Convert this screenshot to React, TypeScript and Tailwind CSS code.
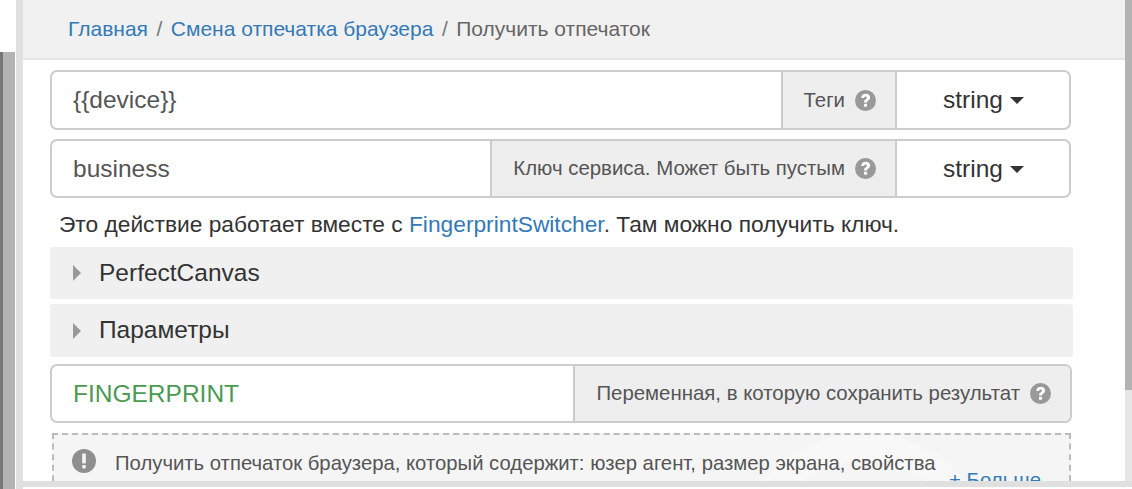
import React from 'react';

const QuestionIcon = () => (
    <svg viewBox="0 0 20 20" className="h-[21px] w-[21px] shrink-0">
        <circle cx="10" cy="10" r="10" fill="#999999" />
        <path d="M5.9 7.6C6.1 5 7.8 3.6 10.2 3.6c2.5 0 4.2 1.5 4.2 3.6 0 1.5-.8 2.3-1.9 3.1-.8.6-1 .9-1 1.7H8.6c0-1.5.4-2.3 1.4-3 .9-.7 1.3-1 1.3-1.6 0-.7-.5-1.1-1.2-1.1-.9 0-1.3.5-1.4 1.4z" fill="#ffffff" />
        <rect x="8.6" y="13" width="2.9" height="2.9" rx=".4" fill="#ffffff" />
    </svg>
);

const Caret = () => <span className="ml-[7px] inline-block border-x-[7px] border-t-[7px] border-x-transparent border-t-[#333333]"></span>;

const Arrow = () => <span className="inline-block border-y-[8px] border-l-[8px] border-y-transparent border-l-[#999999]"></span>;

const InputRow = ({ value, label, green, height }: { value: string; label: string; green?: boolean; height: string }) => (
    <div className={`flex ${height} ${green ? 'mr-[1px]' : 'mr-[2px]'} overflow-hidden rounded-[7px] border-2 border-[#cccccc] bg-white`}>
        <div className={`flex flex-1 items-center pl-[21px] pt-[1px] text-[24.5px] ${green ? 'text-[#4a9a52]' : 'text-[#555555]'}`}>{value}</div>
        <div className="flex items-center gap-[10px] border-l-2 border-[#cccccc] bg-[#eeeeee] pl-[21px] pr-[19px] text-[20.4px] text-[#555555]">
            <span>{label}</span>
            <QuestionIcon />
        </div>
        {!green && (
            <div className="flex w-[174px] items-center justify-center border-l-2 border-[#cccccc] pl-[1px] pt-[1px] text-[24.5px] text-[#333333]">
                string
                <Caret />
            </div>
        )}
    </div>
);

const Section = ({ title, height }: { title: string; height: string }) => (
    <div className={`flex ${height} items-center rounded-[3px] bg-[#f0f0f0] pl-[23px] text-[24.5px] text-[#333333]`}>
        <Arrow />
        <span className="ml-[18px]">{title}</span>
    </div>
);

const App: React.FC = () => {
    return (
        <div className="flex h-[489px] w-[1132px] overflow-hidden bg-white font-['Liberation_Sans',Arial,sans-serif]">
            {/* Left edge of the sidebar */}
            <div className="flex w-[16px] flex-col pt-[52px]">
                <div className="flex flex-1 pr-px">
                    <div className="w-[3px] bg-[#777777]"></div>
                    <div className="flex-1 bg-[#b3b3b3]"></div>
                </div>
            </div>
            <div className="w-[7px] bg-[#e0e0e0]"></div>

            <div className="flex min-w-0 flex-1 flex-col pb-[2px]">
                <div className="flex min-h-0 flex-1">
                    <main className="min-w-0 flex-1 overflow-hidden">
                        <nav className="flex h-[60px] items-center border-b-2 border-[#e5e5e5] bg-[#f1f1f1] pl-[45px] text-[21px] text-[#555555]">
                            <a href="#/" className="text-[#337ab7]">Главная</a>
                            <span className="px-[8.5px] text-[#777777]">/</span>
                            <a href="#/" className="text-[#337ab7]">Смена отпечатка браузера</a>
                            <span className="px-[8.5px] text-[#777777]">/</span>
                            <span className="text-[#666666]">Получить отпечаток</span>
                        </nav>

                        <div className="pl-[27px] pr-[52px] pt-[10px]">
                            <InputRow value="{{device}}" label="Теги" height="h-[60px]" />
                            <div className="mt-[9px]">
                                <InputRow value="business" label="Ключ сервиса. Может быть пустым" height="h-[59px]" />
                            </div>
                            <p className="ml-[9px] mt-[13px] text-[22.75px] leading-[26px] text-[#333333]">
                                Это действие работает вместе с <a href="#/" className="text-[#337ab7]">FingerprintSwitcher</a>. Там можно получить ключ.
                            </p>
                            <div className="mt-[10px]">
                                <Section title="PerfectCanvas" height="h-[52px]" />
                            </div>
                            <div className="mt-[5px]">
                                <Section title="Параметры" height="h-[53px]" />
                            </div>
                            <div className="mt-[7px]">
                                <InputRow value="FINGERPRINT" label="Переменная, в которую сохранить результат" green height="h-[59px]" />
                            </div>
                            <div className="relative ml-[2px] mr-[2px] mt-[10px] h-[80px] border-2 border-dashed border-[#bbbbbb] bg-[#f5f5f5] pl-[18px] pt-[14px]">
                                {/* Faint watermark behind the hint */}
                                <svg viewBox="0 0 340 80" className="absolute right-0 top-0 h-[80px] w-[340px]" fill="none" stroke="#f8f8f8" strokeWidth="28">
                                    <circle cx="136" cy="127" r="115" />
                                </svg>
                                <div className="relative flex items-start">
                                    <svg viewBox="0 0 24 24" className="h-[24px] w-[24px] shrink-0">
                                        <circle cx="12" cy="12" r="12" fill="#8f8f8f" />
                                        <rect x="10.2" y="4.5" width="3.6" height="10" rx="1" fill="#f5f5f5" />
                                        <rect x="10.2" y="16" width="3.6" height="3.5" rx="1" fill="#f5f5f5" />
                                    </svg>
                                    <span className="ml-[19px] text-[20.3px] leading-[28px] text-[#555555]">Получить отпечаток браузера, который содержит: юзер агент, размер экрана, свойства</span>
                                </div>
                                <a href="#/" className="absolute right-[28px] top-[30px] text-[20.4px] text-[#337ab7]">+ Больше</a>
                            </div>
                        </div>
                    </main>
                    {/* Scrollbar */}
                    <div className="flex w-[7px] flex-col bg-[#e6e6e6]">
                        <div className="h-[390px] bg-[#b3b3b3]"></div>
                    </div>
                </div>
                <div className="h-[6px] bg-[#e0e0e0]"></div>
            </div>
        </div>
    );
};

export default App;
